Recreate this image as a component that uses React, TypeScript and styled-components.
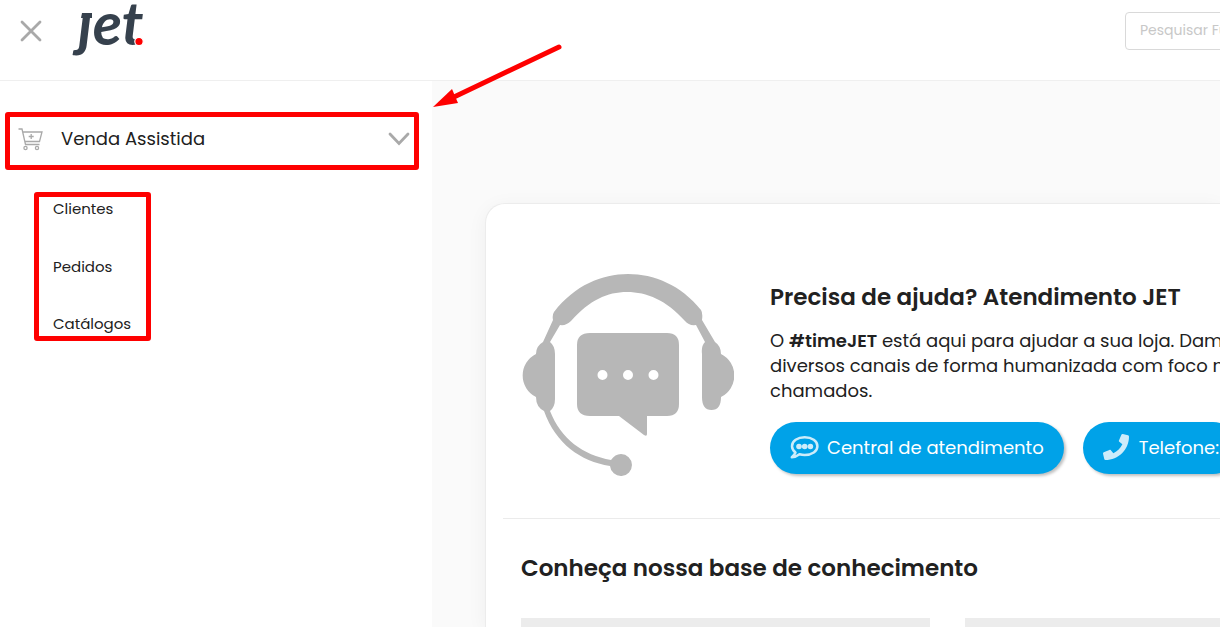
import React from "react";
import styled, { createGlobalStyle } from "styled-components";
import { FaPhone } from "react-icons/fa";

const GlobalStyle = createGlobalStyle`
  * { box-sizing: border-box; }
  body {
    margin: 0;
    background: #fafafa;
    color: #212121;
    font-family: Poppins, Inter, "Liberation Sans", sans-serif;
    overflow: hidden;
  }
  button, input { font: inherit; color: inherit; }
`;

const Page = styled.div`
  position: relative;
  display: flex;
  flex-direction: column;
  height: 100vh;
  overflow: hidden;
`;

const Header = styled.header`
  display: grid;
  flex: none;
  grid-template-columns: 72px 1fr 95px;
  height: 81px;
  overflow: hidden;
  background: #fff;
  border-bottom: 1px solid #efefef;
`;

const CloseButton = styled.button`
  display: flex;
  align-self: start;
  padding: 20px;
  border: 0;
  background: none;
  cursor: pointer;
`;

const LogoLink = styled.a`
  display: block;
  justify-self: start;
  height: 60px;
`;

const Search = styled.input`
  width: 260px;
  height: 38px;
  margin-top: 12px;
  padding: 0 14px 2px;
  border: 1px solid #d9d9d9;
  border-radius: 4px;
  background: #fff;
  font-size: 14px;
  &::placeholder { color: #c8c8c8; opacity: 1; }
`;

const Body = styled.div`
  display: flex;
  flex: 1;
  min-height: 0;
`;

const Sidebar = styled.nav`
  flex: none;
  width: 432px;
  padding: 31px 13px 0 5px;
  background: #fff;
`;

const Marked = styled.div<{ $indented?: boolean }>`
  position: relative;
  ${(p) => p.$indented && "width: 117px; margin: 22px 0 0 29px;"}
`;

const Outline = styled.span`
  position: absolute;
  inset: 0;
  border: 5px solid #fe0000;
  border-radius: 3px;
  pointer-events: none;
`;

const MenuButton = styled.button`
  display: flex;
  align-items: center;
  width: 100%;
  height: 58px;
  padding: 0 9px 5px 13px;
  border: 0;
  background: none;
  font-size: 18px;
  text-align: left;
  cursor: pointer;
`;

const MenuLabel = styled.span`
  flex: 1;
  padding-left: 18px;
`;

const SubMenu = styled.ul`
  display: flex;
  flex-direction: column;
  justify-content: space-between;
  height: 149px;
  margin: 0;
  padding: 6px 0 6px 19px;
  list-style: none;
`;

const SubItem = styled.li`
  font-size: 15px;
  line-height: 22px;
  a { color: inherit; text-decoration: none; }
`;

const Main = styled.main`
  flex: 1;
  min-width: 0;
  padding: 122px 0 0 53px;
  overflow: hidden;
`;

const Card = styled.section`
  height: 100%;
  padding-left: 17px;
  border: 1px solid #ececec;
  border-width: 1px 0 0 1px;
  border-radius: 20px 0 0 0;
  background: #fff;
  box-shadow: 0 4px 20px rgba(0, 0, 0, 0.05);
  overflow: hidden;
`;

const Help = styled.div`
  display: flex;
  gap: 36px;
  height: 315px;
  padding: 70px 0 0 19px;
  border-bottom: 1px solid #ebebeb;
`;

const HelpText = styled.div`
  flex: 1;
  min-width: 0;
  padding-top: 8px;
  white-space: nowrap;
`;

const Title = styled.h2`
  margin: 0;
  font-size: 23px;
  font-weight: 600;
  line-height: 30px;
`;

const Paragraph = styled.p`
  margin: 16px 0 19px;
  font-size: 18px;
  line-height: 25px;
  b { font-weight: 600; }
`;

const Actions = styled.div`
  display: flex;
  gap: 19px;
`;

const Action = styled.a<{ $gap: number }>`
  display: flex;
  flex: none;
  align-items: center;
  gap: ${(p) => p.$gap}px;
  height: 52px;
  padding: 0 20px 2px;
  border-radius: 26px;
  background: #00a2e8;
  box-shadow: 2px 2px 3px rgba(0, 0, 0, 0.25);
  color: #fff;
  font-size: 18px;
  text-decoration: none;
  svg { opacity: 0.8; }
`;

const Knowledge = styled.div`
  padding: 34px 0 0 18px;
`;

const Tiles = styled.div`
  display: grid;
  grid-template-columns: 409px 409px;
  gap: 35px;
  margin-top: 35px;
`;

const Tile = styled.div`
  height: 160px;
  background: #ececec;
`;

const Pointer = styled.svg`
  position: absolute;
  left: 430px;
  top: 42px;
  pointer-events: none;
`;

const Logo = () => (
  <svg width="76" height="60" viewBox="0 0 76 60" role="img" aria-label="jet">
    <text x="6" y="45" fontFamily="Lato, sans-serif" fontSize="60" fontWeight="700" fontStyle="italic" fill="#36414d">ȷet</text>
    <path d="M10 13H20V18H9Z" fill="#36414d" />
    <circle cx="67" cy="41.500" r="4.200" fill="#fe0000" stroke="#fff" strokeWidth="1.200" />
  </svg>
);

const CartIcon = () => (
  <svg width="25" height="24" viewBox="0 0 25 24" fill="none" stroke="#a9a9a9" strokeWidth="1.300">
    <path d="M.5 2H4L7.500 17.500H21.500M4.700 5H24L21.500 14.500H7M13.200 7v5M10.700 9.500h5" />
    <circle cx="7.500" cy="21" r="1.600" />
    <circle cx="19" cy="21" r="1.600" />
  </svg>
);

const ChatIcon = () => (
  <svg width="29" height="24" viewBox="0 0 29 24" fill="none" stroke="#fff" strokeWidth="2.500" strokeLinejoin="round">
    <path d="M5.500 17.500C3 15.500 2 13.500 2 11.200C2 6 7.500 2.300 14.700 2.300S27.400 6 27.400 11.200S22 20 14.700 20Q12 20 9.500 19.300Q6 22 1.800 22.300Q4.500 20 5.500 17.500Z" />
    <g fill="#fff" stroke="none">
      <circle cx="9" cy="11.500" r="2.800" />
      <circle cx="14.700" cy="11.500" r="2.800" />
      <circle cx="20.400" cy="11.500" r="2.800" />
    </g>
  </svg>
);

const Headset = () => (
  <svg width="212" height="203" viewBox="0 0 212 203" fill="#b7b7b7" aria-hidden="true">
    <path d="M32 38C53 11 80 0 106 0s53 11 73 36q2 3 1 10l13 22q6 4 6 12a24 24 0 0 1 0 43q0 13-9.500 13t-9.500-13V80q-1-8 3-12l-9-17q-7 1-11-4C144 26 125 18 105 18S68 26 49 47q-5 5-11 4L28 68q5 4 5 12v45q0 8-5 12c11 28 33 44 61 49q4-6 10-6a11 11 0 1 1-11 12C58 187 34 170 22 137q-8-4-8-14a24 24 0 0 1 0-43q0-8 7-12L31 46q-1-5 1-8Z" />
    <path fillRule="evenodd" d="M68 59h77q12 0 12 12v59q0 12-12 12h-20v18q0 3-3 1L97 142H68q-13 0-13-12V71q0-12 13-12Zm12.500 37a5 5 0 1 0 0 10a5 5 0 1 0 0-10Zm25.500 0a5 5 0 1 0 0 10a5 5 0 1 0 0-10Zm25.500 0a5 5 0 1 0 0 10a5 5 0 1 0 0-10Z" />
  </svg>
);

export default function App() {
  return (
    <>
      <GlobalStyle />
      <Page>
        <Header>
          <CloseButton aria-label="Fechar menu">
            <svg width="22" height="22" viewBox="0 0 22 22" stroke="#a9a9a9" strokeWidth="2.800" strokeLinecap="round">
              <path d="M2 2l18 18M20 2L2 20" />
            </svg>
          </CloseButton>
          <LogoLink href="#"><Logo /></LogoLink>
          <Search type="search" aria-label="Pesquisar Função" placeholder="Pesquisar Função" />
        </Header>
        <Body>
          <Sidebar>
            <Marked>
              <MenuButton aria-expanded="true">
                <CartIcon />
                <MenuLabel>Venda Assistida</MenuLabel>
                <svg width="22" height="14" viewBox="0 0 22 14" fill="none" stroke="#a9a9a9" strokeWidth="2.800" strokeLinecap="round">
                  <path d="M2 2l9 9.500L20 2" />
                </svg>
              </MenuButton>
              <Outline />
            </Marked>
            <Marked $indented>
              <SubMenu>
                <SubItem><a href="#clientes">Clientes</a></SubItem>
                <SubItem><a href="#pedidos">Pedidos</a></SubItem>
                <SubItem><a href="#catalogos">Catálogos</a></SubItem>
              </SubMenu>
              <Outline />
            </Marked>
          </Sidebar>
          <Main>
            <Card>
              <Help>
                <Headset />
                <HelpText>
                  <Title>Precisa de ajuda? Atendimento JET</Title>
                  <Paragraph>
                    O <b>#timeJET</b> está aqui para ajudar a sua loja. Damos<br />
                    diversos canais de forma humanizada com foco na<br />
                    chamados.
                  </Paragraph>
                  <Actions>
                    <Action href="#atendimento" $gap={8}><ChatIcon />Central de atendimento</Action>
                    <Action href="#telefone" $gap={10}><FaPhone size={26} />Telefone:</Action>
                  </Actions>
                </HelpText>
              </Help>
              <Knowledge>
                <Title>Conheça nossa base de conhecimento</Title>
                <Tiles><Tile /><Tile /></Tiles>
              </Knowledge>
            </Card>
          </Main>
        </Body>
        <Pointer width="134" height="68" viewBox="0 0 134 68" aria-hidden="true">
          <path d="M129 5L24 55" stroke="#fe0000" strokeWidth="5" strokeLinecap="round" />
          <path d="M3 65L22 47L28 61Z" fill="#fe0000" />
        </Pointer>
      </Page>
    </>
  );
}
